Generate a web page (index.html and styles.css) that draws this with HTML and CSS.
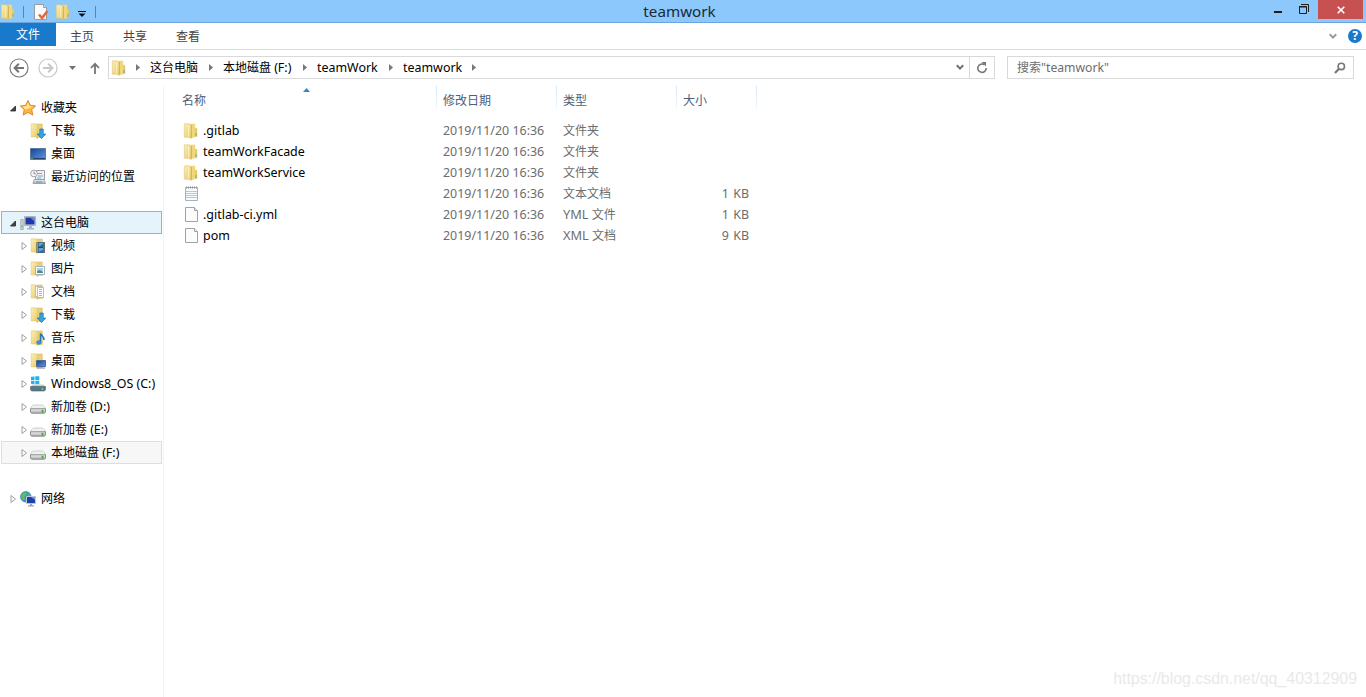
FILE: index.html
```html
<!DOCTYPE html>
<html lang="zh-CN">

<head>
    <meta charset="UTF-8">
    <meta name="viewport" content="width=device-width, initial-scale=1.0">
    <title>teamwork</title>
    <link rel="stylesheet" href="styles.css">
</head>

<body>
    <!-- Icons -->
    <svg class="sprite" aria-hidden="true">
        <defs>
            <linearGradient id="gold" x1="0" y1="0" x2="1" y2="1">
                <stop offset="0" stop-color="#fbf0b6" />
                <stop offset="1" stop-color="#e6c665" />
            </linearGradient>
            <linearGradient id="screen" x1="0" y1="0" x2="1" y2="1">
                <stop offset="0" stop-color="#1b3f96" />
                <stop offset="1" stop-color="#5b9be6" />
            </linearGradient>
            <linearGradient id="metal" x1="0" y1="0" x2="0" y2="1">
                <stop offset="0" stop-color="#f4f4f4" />
                <stop offset="1" stop-color="#a9abad" />
            </linearGradient>
        </defs>
        <symbol id="folder" viewBox="0 0 16 16">
            <path d="M9 4.5l4.6.6.6 1v7.6L9 14.500z" fill="#e5c966" />
            <path d="M6.5.8h5.7v13.4l-4.700.6z" fill="#f0d77c" />
            <path d="M1.3.8h4.4l2.600 1.800v13l-2.500-1.400H1.300z" fill="url(#gold)" stroke="#dcbf62" stroke-width=".5" />
            <path d="M5.7 1.500v12.200" stroke="#fdf5c8" stroke-width=".9" />
            <path d="M8.500 2v12.600" stroke="#cfab47" stroke-width=".7" />
            <path d="M13 10v3" stroke="#5fa9bd" />
        </symbol>
        <symbol id="open" viewBox="0 0 16 16">
            <path d="M6.5 1h5.8v13.5H7z" fill="#ead07c" stroke="#d6b65c" stroke-width=".5" />
            <path d="M1.2.8h4.3l2.3 1.8v13L5.4 14H1.2z" fill="url(#gold)" stroke="#dcbf62" stroke-width=".5" />
        </symbol>
        <symbol id="star" viewBox="0 0 16 16">
            <path d="M8 .5l2.3 4.8 5.3.7-3.9 3.6 1.1 5.5L8 12.4l-4.8 2.7 1-5.5L.4 6l5.3-.7z" fill="#fbb83d" stroke="#e27b22" stroke-width=".9" stroke-linejoin="round" />
            <path d="M8 2.3l1.5 3.8 3.8.5-7.8 3L2.6 6.7l3.9-.6z" fill="#ffe391" />
        </symbol>
        <symbol id="download" viewBox="0 0 16 16">
            <use href="#open" />
            <path d="M9.8 6h3.4v5h2.6l-4.3 4.6L7.2 11h2.6z" fill="#35a2e5" stroke="#1c6faf" stroke-width=".7" />
        </symbol>
        <symbol id="desktop" viewBox="0 0 16 16">
            <path d="M.5 2.5h15v11H.5z" fill="url(#screen)" stroke="#5d7aa0" />
            <path d="M1 12.5h14" stroke="#24406f" />
            <path d="M1.5 12.5h1" stroke="#8ee05d" />
        </symbol>
        <symbol id="recent" viewBox="0 0 16 16">
            <path d="M5.5 1.5h9v9h-9z" fill="#eef0f2" stroke="#9a9da1" />
            <path d="M7 4.5h5M8 7h5M7 9h4" stroke="#79aac5" />
            <path d="M4 10.5h10l1.5 4H3z" fill="url(#metal)" stroke="#8b8e91" stroke-width=".7" />
            <path d="M6 13h6" stroke="#4c9dc5" />
            <circle cx="4" cy="4.5" r="3.4" fill="#f5f6f7" stroke="#a0a4a9" />
            <path d="M4 2.5v2.3h1.7" fill="none" stroke="#777" stroke-width=".8" />
        </symbol>
        <symbol id="computer" viewBox="0 0 16 16">
            <path d="M.8 4.5h2.4v10H.8z" fill="#d5d8da" stroke="#93989c" stroke-width=".7" />
            <path d="M2 10v2.5" stroke="#52c829" />
            <path d="M4.5 1.5h11v9h-11z" fill="#cfd3d8" stroke="#9da2a8" stroke-width=".7" />
            <path d="M5.5 2.5h9v7h-9z" fill="#1c39ab" />
            <path d="M10 2.5h4.5v4z" fill="#6488dc" />
            <path d="M9 11h3v2h2v1.5H7V13h2z" fill="#afb3b8" />
        </symbol>
        <symbol id="video" viewBox="0 0 16 16">
            <use href="#open" />
            <path d="M6.5 4h8.5v11H6.5z" fill="#3e4449" />
            <path d="M8.5 4.5h4.5V9H8.5zM8.5 10H13v4.5H8.5z" fill="#59a8dd" />
            <path d="M8.5 9L13 6v3zM8.5 14l4.5-2v2.5H8.5z" fill="#2b6087" />
            <path d="M7.5 4.5V15M14 4.5V15" stroke="#e5e5e5" stroke-dasharray="1 1" />
        </symbol>
        <symbol id="picture" viewBox="0 0 16 16">
            <use href="#open" />
            <path d="M5.5 5.5h9v8h-9z" fill="#fff" stroke="#a5aeb4" />
            <path d="M7 7h6v5H7z" fill="#a2d5ec" />
            <path d="M7 12v-2l3-1 3 2v1z" fill="#4f8b84" />
        </symbol>
        <symbol id="document" viewBox="0 0 16 16">
            <use href="#open" />
            <path d="M5.500 2.500h6v10h-6z" fill="#fff" stroke="#a4abb0" stroke-width=".7" />
            <path d="M7.500 3.500h6v10h-6z" fill="#fff" stroke="#9da5ac" stroke-width=".7" />
            <path d="M9 5.500h3M9 7.500h3M9 9.500h3M9 11.500h3" stroke="#78a6d0" stroke-width=".8" />
        </symbol>
        <symbol id="music" viewBox="0 0 16 16">
            <use href="#open" />
            <path d="M10.5 12V3.5c1 2.2 4 3 3.3 6.6" fill="none" stroke="#2376b5" stroke-width="1.6" />
            <ellipse cx="9" cy="12.5" rx="2.3" ry="1.8" fill="#3b9ade" stroke="#2271ad" stroke-width=".6" />
        </symbol>
        <symbol id="deskfolder" viewBox="0 0 16 16">
            <use href="#open" />
            <path d="M6.5 7.5h9v6h-9z" fill="url(#screen)" stroke="#506c92" />
            <path d="M7 15h8" stroke="#7a8692" />
        </symbol>
        <symbol id="windisk" viewBox="0 0 16 16">
            <path d="M1 .8L4.5.4v3.5H1zM5.3.3h4v3.6h-4zM1 4.7h3.5v3.5L1 7.8zM5.3 4.7h4v3.5h-4z" fill="#20b4ed" />
            <path d="M2.5 8.5h11l2 2.5H.5z" fill="#c7cdd1" />
            <path d="M.5 10.5h15v3l-1 1.5h-13l-1-1.5z" fill="#58798a" stroke="#466170" stroke-width=".6" />
            <path d="M12.5 12v2" stroke="#75e043" stroke-width="1.4" />
        </symbol>
        <symbol id="disk" viewBox="0 0 16 16">
            <path d="M3.5 6h9c1.5.8 2.6 2 3 4H.5c.4-2 1.5-3.2 3-4z" fill="#f0f0f1" stroke="#bcbec0" stroke-width=".7" />
            <path d="M.5 9.8h15V13l-1 1.2h-13L.5 13z" fill="url(#metal)" stroke="#77797b" stroke-width=".8" />
            <path d="M12.5 10.8v2.6" stroke="#32b51c" stroke-width="1.8" />
        </symbol>
        <symbol id="network" viewBox="0 0 16 16">
            <circle cx="5.8" cy="5.8" r="5.3" fill="#3598d4" stroke="#2375ad" stroke-width=".6" />
            <path d="M2 2.5L6 1l1 2-3 3 1 2-2 1.5-2-4zM8 2l2.5 2L9 6z" fill="#65bd55" />
            <path d="M6.5 5.5h9v7h-9z" fill="#1c3eae" stroke="#c1c9d3" />
            <path d="M11 6h4v3z" fill="#6898e5" />
            <path d="M10 13h2v1.2h2v1.2H8v-1.2h2z" fill="#9ca3ab" />
        </symbol>
        <symbol id="file" viewBox="0 0 16 16">
            <path d="M2.5.5h9l3 3v11h-12z" fill="#fcfcfc" stroke="#a2a2a2" />
            <path d="M11.5.5v3h3" fill="#eee" stroke="#a2a2a2" />
        </symbol>
        <symbol id="text" viewBox="0 0 16 16">
            <path d="M2.5 1.5h12v13h-12z" fill="#f6fafc" stroke="#aab0b4" />
            <path d="M3 5.5h11M3 7.5h11M3 9.5h11M3 11.5h11" stroke="#b0cbdc" />
            <path d="M3 1.5h11" stroke="#8a8f92" stroke-width="2" stroke-dasharray="1 1" />
        </symbol>
        <symbol id="closed-arrow" viewBox="0 0 8 10">
            <path d="M2 1.5v7L6.500 5z" fill="#fff" stroke="#a0a0a0" />
        </symbol>
        <symbol id="open-arrow" viewBox="0 0 8 10">
            <path d="M6.5 3v5h-5z" fill="#444" stroke="#262626" stroke-width=".8" />
        </symbol>
        <symbol id="crumb-arrow" viewBox="0 0 5 8">
            <path d="M0 0v7l4-3.5z" fill="#777" />
        </symbol>
        <symbol id="chevron" viewBox="0 0 8 7">
            <path d="M.8 1.2L4 4.6l3.2-3.4" fill="none" stroke="currentColor" stroke-width="2" />
        </symbol>
    </svg>

    <!-- Title bar -->
    <header class="titlebar">
        <div class="quick">
            <svg class="icon first"><use href="#folder" /></svg>
            <span class="bar"></span>
            <svg class="icon" viewBox="0 0 16 16">
                <path d="M1.5.5h9l3 3v12h-12z" fill="#fafafa" stroke="#979ca1" />
                <path d="M10.5.5v3h3" fill="#e5e5e5" stroke="#979ca1" />
                <path d="M6 10.5L9 14l5.5-7" fill="none" stroke="#e9683b" stroke-width="2.6" />
            </svg>
            <svg class="icon"><use href="#folder" /></svg>
            <svg class="customize" viewBox="0 0 8 6">
                <path d="M0 .5h8" stroke="#111" />
                <path d="M.5 2.5h7L4 6z" fill="#111" />
            </svg>
            <span class="bar"></span>
        </div>
        <h1>teamwork</h1>
        <div class="controls">
            <svg class="minimize" viewBox="0 0 8 3"><path d="M0 0h8v2H0z" fill="#1d1d1d" /></svg>
            <svg class="restore" viewBox="0 0 10 10">
                <path d="M.5 2.5h7v7h-7zM0 3h8M2 .5h7.5V8" fill="none" stroke="#1d1d1d" />
            </svg>
            <button class="close">
                <svg viewBox="0 0 8 8"><path d="M.7.7l6.6 6.6M7.3.7L.7 7.3" stroke="#fff" stroke-width="1.6" /></svg>
            </button>
        </div>
    </header>

    <!-- Ribbon tabs -->
    <nav class="tabs">
        <a class="tab active">文件</a>
        <a class="tab">主页</a>
        <a class="tab">共享</a>
        <a class="tab">查看</a>
        <div class="tab-tools">
            <svg class="chevron"><use href="#chevron" /></svg>
            <span class="help">?</span>
        </div>
    </nav>

    <!-- Address bar -->
    <div class="toolbar">
        <svg class="round" viewBox="0 0 20 20">
            <circle cx="10" cy="10" r="9" fill="none" stroke="#7c7c7c" stroke-width="1.2" />
            <path d="M15 10H6M9.8 5.8L5.6 10l4.2 4.2" fill="none" stroke="#747474" stroke-width="2" />
        </svg>
        <svg class="round" viewBox="0 0 20 20">
            <circle cx="10" cy="10" r="9" fill="none" stroke="#c8c8c8" stroke-width="1.2" />
            <path d="M5 10h9M10.2 5.8l4.2 4.2-4.2 4.2" fill="none" stroke="#c8c8c8" stroke-width="2" />
        </svg>
        <svg class="history" viewBox="0 0 7 4"><path d="M0 0h7L3.5 4z" fill="#747474" /></svg>
        <svg class="up" viewBox="0 0 10 12">
            <path d="M5 12V2M1 6l4-4.2L9 6" fill="none" stroke="#747474" stroke-width="1.8" />
        </svg>
        <div class="address">
            <svg class="icon"><use href="#folder" /></svg>
            <svg class="crumb-arrow"><use href="#crumb-arrow" /></svg>
            <span class="crumb c1">这台电脑</span>
            <svg class="crumb-arrow"><use href="#crumb-arrow" /></svg>
            <span class="crumb c2">本地磁盘 <span class="en">(F:)</span></span>
            <svg class="crumb-arrow"><use href="#crumb-arrow" /></svg>
            <span class="crumb c3 en">teamWork</span>
            <svg class="crumb-arrow"><use href="#crumb-arrow" /></svg>
            <span class="crumb c4 en">teamwork</span>
            <svg class="crumb-arrow"><use href="#crumb-arrow" /></svg>
            <svg class="chevron"><use href="#chevron" /></svg>
            <div class="refresh">
                <svg viewBox="0 0 12 12">
                    <path d="M8.2 2.6A4.2 4.2 0 1 0 10.2 6" fill="none" stroke="#777" stroke-width="1.6" />
                    <path d="M5.5 0H10v4.5z" fill="#777" />
                </svg>
            </div>
        </div>
        <div class="search">
            <span>搜索<span class="en">"teamwork"</span></span>
            <svg viewBox="0 0 12 12">
                <circle cx="7.3" cy="4.4" r="3.2" fill="none" stroke="#777" stroke-width="1.6" />
                <path d="M5 6.8L1 11" stroke="#777" stroke-width="2.2" />
            </svg>
        </div>
    </div>

    <main>
        <!-- Navigation pane -->
        <aside>
            <div class="node"><svg class="arrow"><use href="#open-arrow" /></svg><svg class="icon"><use href="#star" /></svg>收藏夹</div>
            <div class="node child"><svg class="icon"><use href="#download" /></svg>下载</div>
            <div class="node child"><svg class="icon"><use href="#desktop" /></svg>桌面</div>
            <div class="node child"><svg class="icon"><use href="#recent" /></svg>最近访问的位置</div>

            <div class="node group selected"><svg class="arrow"><use href="#open-arrow" /></svg><svg class="icon"><use href="#computer" /></svg>这台电脑</div>
            <div class="node child"><svg class="arrow"><use href="#closed-arrow" /></svg><svg class="icon"><use href="#video" /></svg>视频</div>
            <div class="node child"><svg class="arrow"><use href="#closed-arrow" /></svg><svg class="icon"><use href="#picture" /></svg>图片</div>
            <div class="node child"><svg class="arrow"><use href="#closed-arrow" /></svg><svg class="icon"><use href="#document" /></svg>文档</div>
            <div class="node child"><svg class="arrow"><use href="#closed-arrow" /></svg><svg class="icon"><use href="#download" /></svg>下载</div>
            <div class="node child"><svg class="arrow"><use href="#closed-arrow" /></svg><svg class="icon"><use href="#music" /></svg>音乐</div>
            <div class="node child"><svg class="arrow"><use href="#closed-arrow" /></svg><svg class="icon"><use href="#deskfolder" /></svg>桌面</div>
            <div class="node child"><svg class="arrow"><use href="#closed-arrow" /></svg><svg class="icon"><use href="#windisk" /></svg><span class="en">Windows8_OS (C:)</span></div>
            <div class="node child"><svg class="arrow"><use href="#closed-arrow" /></svg><svg class="icon"><use href="#disk" /></svg><span>新加卷 <span class="en">(D:)</span></span></div>
            <div class="node child"><svg class="arrow"><use href="#closed-arrow" /></svg><svg class="icon"><use href="#disk" /></svg><span>新加卷 <span class="en">(E:)</span></span></div>
            <div class="node child current"><svg class="arrow"><use href="#closed-arrow" /></svg><svg class="icon"><use href="#disk" /></svg><span>本地磁盘 <span class="en">(F:)</span></span></div>

            <div class="node group"><svg class="arrow"><use href="#closed-arrow" /></svg><svg class="icon"><use href="#network" /></svg>网络</div>
        </aside>

        <!-- File list -->
        <section class="files">
            <div class="row head">
                <div class="name">名称<svg class="sort" viewBox="0 0 7 4"><path d="M0 4l3.5-4L7 4z" fill="#3f86ad" /></svg></div>
                <div>修改日期</div>
                <div>类型</div>
                <div>大小</div>
            </div>
            <div class="row">
                <div class="name"><svg class="icon"><use href="#folder" /></svg><span class="en">.gitlab</span></div>
                <div class="en">2019/11/20 16:36</div>
                <div>文件夹</div>
                <div class="size"></div>
            </div>
            <div class="row">
                <div class="name"><svg class="icon"><use href="#folder" /></svg><span class="en">teamWorkFacade</span></div>
                <div class="en">2019/11/20 16:36</div>
                <div>文件夹</div>
                <div class="size"></div>
            </div>
            <div class="row">
                <div class="name"><svg class="icon"><use href="#folder" /></svg><span class="en">teamWorkService</span></div>
                <div class="en">2019/11/20 16:36</div>
                <div>文件夹</div>
                <div class="size"></div>
            </div>
            <div class="row">
                <div class="name"><svg class="icon"><use href="#text" /></svg></div>
                <div class="en">2019/11/20 16:36</div>
                <div>文本文档</div>
                <div class="size en">1 KB</div>
            </div>
            <div class="row">
                <div class="name"><svg class="icon"><use href="#file" /></svg><span class="en">.gitlab-ci.yml</span></div>
                <div class="en">2019/11/20 16:36</div>
                <div><span class="type">YML</span> 文件</div>
                <div class="size en">1 KB</div>
            </div>
            <div class="row">
                <div class="name"><svg class="icon"><use href="#file" /></svg><span class="en">pom</span></div>
                <div class="en">2019/11/20 16:36</div>
                <div><span class="type">XML</span> 文档</div>
                <div class="size en">9 KB</div>
            </div>
        </section>
    </main>

    <div class="watermark">https://blog.csdn.net/qq_40312909</div>
</body>

</html>
```

FILE: styles.css
```css
* {
    box-sizing: border-box;
}

body {
    margin: 0;
    height: 100vh;
    display: flex;
    flex-direction: column;
    overflow: hidden;
    background: #fff;
    color: #000;
    font-family: "Noto Sans", "Noto Sans CJK SC", sans-serif;
    font-size: 12px;
    line-height: 20px;
    white-space: nowrap;
}

svg {
    display: block;
    flex-shrink: 0;
}

.sprite {
    position: absolute;
    width: 0;
    height: 0;
}

.icon {
    width: 16px;
    height: 16px;
}

.en {
    font-size: 12.45px;
}

/* title bar */
.titlebar {
    display: grid;
    grid-template-columns: 1fr auto 1fr;
    height: 23px;
    background: #8cc8fb;
    border-bottom: 1px solid #6ba5dc;
}

.titlebar h1 {
    margin: 0;
    padding-right: 7px;
    color: #1b2a36;
    font-size: 15.2px;
    font-weight: normal;
    line-height: 23px;
}

.quick {
    display: flex;
    align-items: center;
}

.bar {
    width: 1px;
    height: 12px;
    margin: 0 9px 0 7px;
    background: #5c84a6;
}

.quick .icon + .icon {
    margin-left: 6px;
}

.customize {
    width: 8px;
    height: 6px;
    margin: 4px 2px 0 7px;
}

.controls {
    display: flex;
    justify-content: flex-end;
    align-items: flex-start;
    padding-right: 3px;
}

.minimize {
    width: 8px;
    height: 3px;
    margin: 11px 17px 0 0;
}

.restore {
    width: 10px;
    height: 10px;
    margin: 4px 9px 0 0;
}

.close {
    display: flex;
    align-items: center;
    justify-content: center;
    width: 45px;
    height: 19px;
    padding: 0;
    border: none;
    background: #c75050;
}

.close svg {
    width: 8px;
    height: 8px;
}

/* tabs */
.tabs {
    display: flex;
    height: 27px;
    border-bottom: 1px solid #dadbdc;
}

.tab {
    width: 53px;
    padding-right: 1px;
    color: #444;
    line-height: 27px;
    text-align: center;
}

.tab.active {
    width: 56px;
    height: 23px;
    padding-right: 0;
    color: #fff;
    background: #1979ca;
    line-height: 24px;
}

.tab-tools {
    display: flex;
    align-items: center;
    margin-left: auto;
    padding-right: 4px;
    color: #999;
}

.chevron {
    width: 8px;
    height: 7px;
}

.help {
    width: 14px;
    height: 14px;
    margin-left: 11px;
    border-radius: 50%;
    background: #1979ca;
    color: #fff;
    font-size: 12px;
    font-weight: bold;
    line-height: 14px;
    text-align: center;
}

/* address bar */
.toolbar {
    display: flex;
    align-items: center;
    height: 35px;
    padding: 0 12px 0 9px;
}

.round {
    width: 20px;
    height: 20px;
    margin-right: 9px;
}

.history {
    width: 7px;
    height: 4px;
    margin: 0 14px 0 2px;
}

.up {
    width: 10px;
    height: 12px;
    margin-right: 8px;
}

.address {
    display: flex;
    align-items: center;
    width: 887px;
    height: 23px;
    margin-right: 12px;
    padding-left: 2px;
    border: 1px solid #d9d9d9;
}

.crumb-arrow {
    width: 5px;
    height: 8px;
    margin: 0 8px 0 9px;
}

.crumb {
    padding-left: 1px;
}

.c1 {
    width: 51px;
}

.c2 {
    width: 72px;
}

.c3 {
    width: 64px;
}

.c4 {
    width: 61px;
}

.address .chevron {
    margin-left: auto;
    margin-right: 5px;
    color: #707070;
}

.refresh {
    display: flex;
    align-items: center;
    justify-content: center;
    width: 25px;
    height: 21px;
    border-left: 1px solid #d9d9d9;
}

.refresh svg {
    width: 12px;
    height: 12px;
}

.search {
    display: flex;
    align-items: center;
    justify-content: space-between;
    flex: 1;
    height: 23px;
    padding: 0 7px 0 9px;
    border: 1px solid #d9d9d9;
    color: #6d6d6d;
}

.search .en {
    font-size: 12.2px;
}

.search svg {
    width: 12px;
    height: 12px;
}

main {
    display: flex;
    flex: 1;
    padding-top: 1px;
}

/* navigation pane */
aside {
    width: 164px;
    padding: 10px 1px 0;
    border-right: 1px solid #f3f3f3;
}

.node {
    display: flex;
    align-items: center;
    height: 23px;
    padding-left: 18px;
    border: 1px solid transparent;
    width: 161px;
}

.node.child {
    padding-left: 28px;
}

.node .arrow {
    width: 8px;
    height: 10px;
    margin-left: -11px;
    margin-right: 3px;
}

.node.child .arrow {
    margin-left: -10px;
    margin-right: 2px;
}

.node .icon {
    margin-right: 5px;
}

.node.group {
    margin-top: 23px;
}

.node.selected {
    background: #e5f3fb;
    border-color: #70c0e7;
}

.node.current {
    background: #f7f7f7;
    border-color: #dedede;
}

/* file list */
.files {
    padding-left: 19px;
}

.row {
    display: grid;
    grid-template-columns: 254px 120px 120px 80px;
    height: 21px;
    align-items: center;
    color: #6d6d6d;
}

.row > div {
    padding-left: 6px;
}

.row .name {
    display: flex;
    align-items: center;
    padding-left: 0;
    color: #000;
}

.row .icon {
    margin-right: 4px;
}

.row .size {
    padding-right: 8px;
    text-align: right;
    word-spacing: 1px;
}

.type {
    font-size: 12.8px;
}

.row.head {
    height: 24px;
    margin-bottom: 10px;
}

.row.head > div {
    height: 24px;
    color: #4c607a;
    line-height: 29px;
    border-right: 1px solid;
    border-image: linear-gradient(#d3e5f7, #f5f9fd) 1;
}

.row.head .name {
    display: block;
    position: relative;
    margin-left: -1px;
}

.sort {
    position: absolute;
    top: 2px;
    left: 121px;
    width: 7px;
    height: 4px;
}

.watermark {
    position: absolute;
    right: 9px;
    bottom: 8px;
    color: #e9e9e9;
    font-family: "Liberation Sans", Arial, sans-serif;
    font-size: 15.9px;
}
```
